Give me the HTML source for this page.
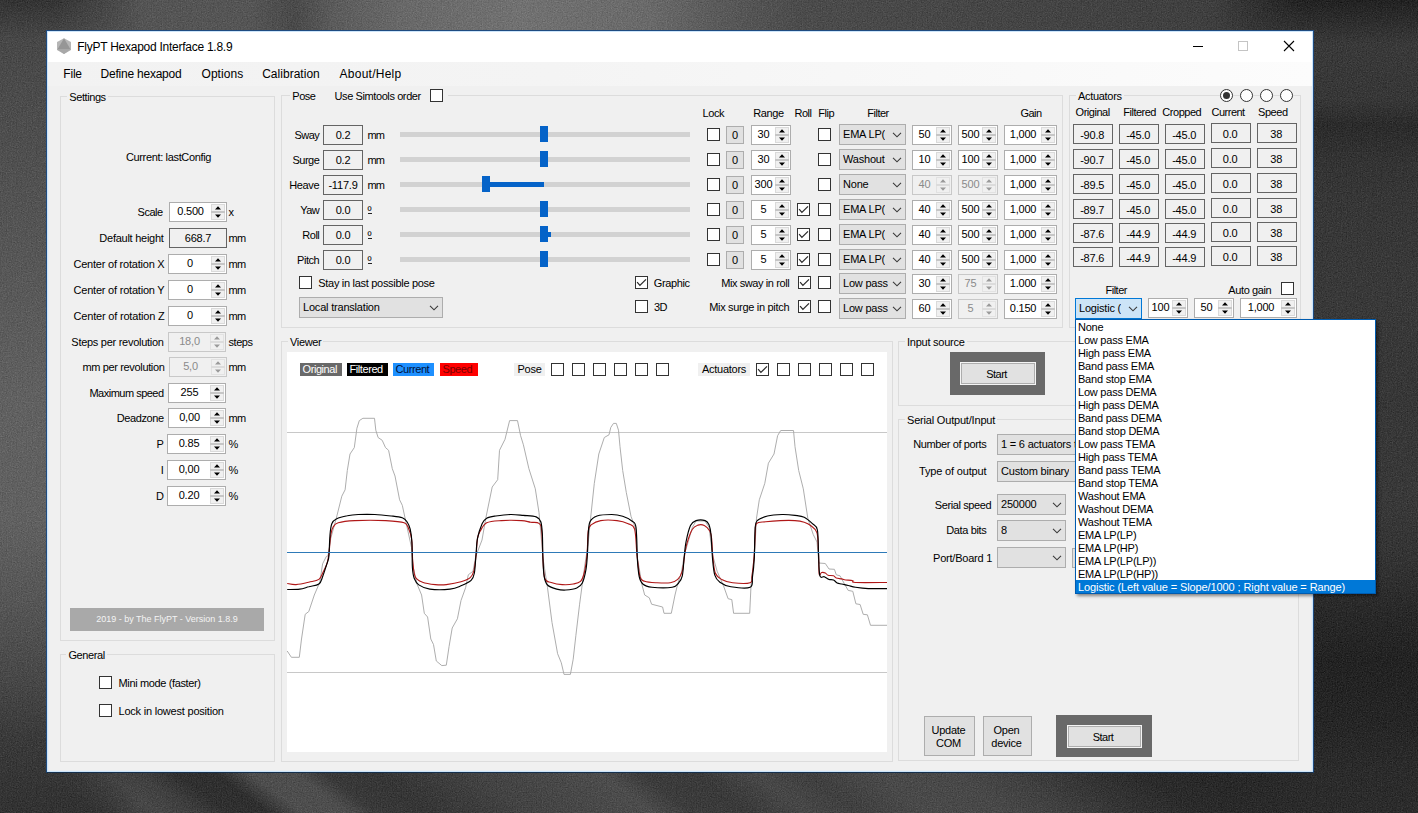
<!DOCTYPE html>
<html><head><meta charset="utf-8"><title>FlyPT Hexapod Interface 1.8.9</title>
<style>
html,body{margin:0;padding:0}
body{width:1418px;height:813px;overflow:hidden;position:relative;background:#444;
 font-family:"Liberation Sans",sans-serif;font-size:11px;color:#000}
#bg,#bg i{position:absolute;left:0;top:0;width:1418px;height:813px;display:block}
#bg{background:linear-gradient(37deg,#232323 1.12%,#343434 2.32%,#292929 3.52%,#404040 5.12%,#4b4b4b 6.32%,#404040 7.72%,#2a2a2a 9.13%,#272727 10.73%,#545454 12.13%,#545454 13.93%,#373737 15.13%,#313131 17.14%,#3a3a3a 19.14%,#454545 21.14%,#4b4b4b 23.54%,#525252 26.15%,#3b3b3b 27.75%,#373737 29.95%,#4b4b4b 32.36%,#404040 34.36%,#4e4e4e 37.16%,#4c4c4c 40.36%,#404040 42.77%,#303030 45.17%,#222222 47.97%,#1c1c1c 52.38%,#262626 54.78%,#242424 57.91%)}
#bg .tp{background:linear-gradient(to right,#2e2e2e 0.0%,#454545 2.1%,#555555 4.9%,#5e5e5e 10.6%,#5f5f5f 17.6%,#4e4e4e 20.8%,#686868 23.6%,#7a7a7a 28.2%,#878787 36.7%,#7c7c7c 45.8%,#656565 50.8%,#515151 56.4%,#484848 70.5%,#404040 84.6%,#303030 91.7%,#151515 100.0%);-webkit-mask-image:linear-gradient(to bottom,#000 0,#000 5%,rgba(0,0,0,.55) 40%,transparent 92%);mask-image:linear-gradient(to bottom,#000 0,#000 5%,rgba(0,0,0,.55) 40%,transparent 92%)}
#bg .lf{width:140px;background:linear-gradient(to bottom,#2e2e2e 0.0%,#4b4b4b 4.9%,#565656 18.5%,#656565 36.9%,#6f6f6f 49.2%,#6f6f6f 64.0%,#606060 73.8%,#4b4b4b 83.6%,#373737 91.0%,#2c2c2c 100.0%);-webkit-mask-image:linear-gradient(to right,#000 0,#000 35%,transparent 100%);mask-image:linear-gradient(to right,#000 0,#000 35%,transparent 100%)}
#bg .rt{left:1218px;width:200px;background:linear-gradient(to bottom,#151515 0.0%,#373737 5.5%,#333333 12.3%,#222222 15.4%,#2e2e2e 19.7%,#333333 24.6%,#363636 36.9%,#333333 49.2%,#363636 61.5%,#2e2e2e 68.9%,#1f1f1f 75.0%,#161616 81.2%,#1a1a1a 88.6%,#222222 94.7%,#232323 100.0%);-webkit-mask-image:linear-gradient(to left,#000 0,#000 55%,transparent 100%);mask-image:linear-gradient(to left,#000 0,#000 55%,transparent 100%)}
div{box-sizing:content-box}
.abs,.t,.grp,.cb,.rb,.sp,.co,.vb,.bt,.pn{position:absolute}
.t{white-space:nowrap;line-height:13px;font-size:11px;letter-spacing:-0.27px}
.gt{background:#f0f0f0;padding:0 2px;margin-left:-2px}
.grp{border:1px solid #dcdcdc}
.cb{border:1px solid #333;background:#fff}
.cb svg{position:absolute;left:0;top:0}
.rb{border:1px solid #333;background:#fff;border-radius:50%}
.rb i{position:absolute;left:2px;top:2px;width:7px;height:7px;border-radius:50%;background:#333}
.sp{border:1px solid #adadad;background:#fff}
.sp .sv{position:absolute;left:0;right:15px;top:0;bottom:0;text-align:center;line-height:17px;letter-spacing:-0.2px;white-space:nowrap}
.sp .sb{position:absolute;right:1px;top:1px;width:14px;height:16px;background:#f0f0f0;box-shadow:inset 0 0 0 1px #dadada}
.sp .sb:after{content:"";position:absolute;left:0;right:0;top:7px;height:2px;background:#c6c6c6}
.sp .sb svg{position:absolute;left:0;top:0;z-index:2}
.ar{fill:#000}
.sp.dis{background:#f0f0f0;border-color:#c8c8c8;color:#8a8a8a}
.sp.dis .ar{fill:#9a9a9a}
.sp.dis .sb{box-shadow:inset 0 0 0 1px #e2e2e2}
.sp.dis .sb:after{background:#dcdcdc}
.co{border:1px solid #adadad;background:#e1e1e1}
.co .cv{position:absolute;left:3px;top:0;bottom:0;line-height:19px;white-space:nowrap;letter-spacing:-0.2px;overflow:hidden}
.co .ch{position:absolute;right:3px;top:7px}
.co.act{border-color:#0078d7;background:#cce4f7}
.vb{border:1px solid #646464;background:#f0f0f0;text-align:center;line-height:19px;letter-spacing:-0.2px}
.bt{border:1px solid #adadad;background:#e1e1e1;text-align:center;letter-spacing:-0.25px}
.bt span{position:absolute;left:0;right:0;top:50%;transform:translateY(-50%);line-height:13px}
.va{line-height:21px;text-indent:-1.6px}
.pn{background:#696969}
.b2 span{margin-left:-2px;margin-top:1px}
.st{border-color:#f4f4f4;box-shadow:inset 0 0 0 1px #adadad;letter-spacing:-0.5px}
.st span{margin-left:-3px}
</style></head><body>
<div id="bg"><i class="tp"></i><i class="lf"></i><i class="rt"></i><svg style="position:absolute;left:0;top:0;opacity:.3" width="1418" height="813"><filter id="nz" color-interpolation-filters="sRGB"><feTurbulence type="fractalNoise" baseFrequency="0.8" numOctaves="2" seed="3"/><feColorMatrix type="matrix" values="0.33 0.33 0.33 0 -0.24 0.33 0.33 0.33 0 -0.24 0.33 0.33 0.33 0 -0.24 0 0 0 0 1"/></filter><rect width="1418" height="813" filter="url(#nz)"/></svg></div>

<div class="abs" style="left:46.2px;top:30.4px;width:1267.7px;height:742.4px;background:#f0f0f0;border:1.2px solid #1f4b80;border-bottom-color:#15304d;box-sizing:border-box;box-shadow:inset 0 0 1.2px 0.8px rgba(185,222,255,.95)"></div>
<div class="abs" style="left:48px;top:32px;width:1264px;height:30px;background:#fff"></div>
<div class="abs" style="left:48px;top:62px;width:1264px;height:24px;background:linear-gradient(to right,#f2f2f2 0,#f4f4f4 40%,#fcfcfc 100%)"></div>
<svg class="abs" style="left:56px;top:37px" width="16" height="18" viewBox="0 0 16 18"><polygon points="8,1.2 15,5 15,13 8,17 1,13 1,5" fill="#b6b6b6"/><polygon points="8,1.2 14.6,12.6 1.4,12.6" fill="#969696"/><polygon points="1.4,12.6 14.6,12.6 8,17" fill="#a8a8a8"/></svg>
<div class="abs" style="left:77.3px;top:39px;font-size:12px;line-height:16px;letter-spacing:-0.26px;white-space:nowrap">FlyPT Hexapod Interface 1.8.9</div>
<svg class="abs" style="left:1180px;top:32px" width="132" height="30" viewBox="0 0 132 30"><path d="M13 14.5 H23" stroke="#000" stroke-width="1"/><rect x="58.5" y="9.5" width="9" height="9" fill="none" stroke="#c4c4c4" stroke-width="1"/><path d="M104 9 L114 19 M114 9 L104 19" stroke="#000" stroke-width="1.1"/></svg>
<div class="abs" style="left:63.3px;top:66px;font-size:12px;line-height:16px;letter-spacing:-0.2px;white-space:nowrap">File</div>
<div class="abs" style="left:100.5px;top:66px;font-size:12px;line-height:16px;letter-spacing:-0.22px;white-space:nowrap">Define hexapod</div>
<div class="abs" style="left:201.5px;top:66px;font-size:12px;line-height:16px;letter-spacing:0.05px;white-space:nowrap">Options</div>
<div class="abs" style="left:262.2px;top:66px;font-size:12px;line-height:16px;letter-spacing:0.02px;white-space:nowrap">Calibration</div>
<div class="abs" style="left:339.5px;top:66px;font-size:12px;line-height:16px;letter-spacing:0.26px;white-space:nowrap">About/Help</div>
<div class="grp" style="left:60px;top:96px;width:213px;height:543px"></div>
<div class="t gt" style="left:69.3px;top:91.0px;letter-spacing:-0.42px;">Settings</div>
<div class="t " style="left:68.5px;width:200px;text-align:center;top:151.0px;letter-spacing:-0.34px;">Current: lastConfig</div>
<div class="t " style="right:1255.4px;top:206.0px;letter-spacing:-0.50px;">Scale</div>
<div class="sp" style="left:169px;top:202px;width:56px;height:18px;"><span class="sv">0.500</span><span class="sb"><svg width="14" height="16" viewBox="0 0 14 16"><path class="ar" d="M4 5.5 L7 2.3 L10 5.5 Z M4 10.5 L7 13.7 L10 10.5 Z"/></svg></span></div>
<div class="t " style="left:228.6px;top:206.0px;letter-spacing:-0.27px;">x</div>
<div class="t " style="right:1254.4px;top:232.0px;letter-spacing:-0.26px;">Default height</div>
<div class="vb" style="left:169px;top:228px;width:56px;height:18px;">668.7</div>
<div class="t " style="left:228.6px;top:232.0px;letter-spacing:-0.80px;">mm</div>
<div class="t " style="right:1253.5px;top:258.0px;letter-spacing:-0.22px;">Center of rotation X</div>
<div class="sp" style="left:168px;top:254px;width:57px;height:18px;"><span class="sv">0</span><span class="sb"><svg width="14" height="16" viewBox="0 0 14 16"><path class="ar" d="M4 5.5 L7 2.3 L10 5.5 Z M4 10.5 L7 13.7 L10 10.5 Z"/></svg></span></div>
<div class="t " style="left:228.6px;top:258.0px;letter-spacing:-0.80px;">mm</div>
<div class="t " style="right:1253.5px;top:284.0px;letter-spacing:-0.21px;">Center of rotation Y</div>
<div class="sp" style="left:168px;top:280px;width:57px;height:18px;"><span class="sv">0</span><span class="sb"><svg width="14" height="16" viewBox="0 0 14 16"><path class="ar" d="M4 5.5 L7 2.3 L10 5.5 Z M4 10.5 L7 13.7 L10 10.5 Z"/></svg></span></div>
<div class="t " style="left:228.6px;top:284.0px;letter-spacing:-0.80px;">mm</div>
<div class="t " style="right:1253.5px;top:310.0px;letter-spacing:-0.19px;">Center of rotation Z</div>
<div class="sp" style="left:168px;top:306px;width:57px;height:18px;"><span class="sv">0</span><span class="sb"><svg width="14" height="16" viewBox="0 0 14 16"><path class="ar" d="M4 5.5 L7 2.3 L10 5.5 Z M4 10.5 L7 13.7 L10 10.5 Z"/></svg></span></div>
<div class="t " style="left:228.6px;top:310.0px;letter-spacing:-0.80px;">mm</div>
<div class="t " style="right:1254.4px;top:336.0px;letter-spacing:-0.28px;">Steps per revolution</div>
<div class="sp dis" style="left:168px;top:332px;width:56px;height:18px;"><span class="sv">18,0</span><span class="sb"><svg width="14" height="16" viewBox="0 0 14 16"><path class="ar" d="M4 5.5 L7 2.3 L10 5.5 Z M4 10.5 L7 13.7 L10 10.5 Z"/></svg></span></div>
<div class="t " style="left:228.6px;top:336.0px;letter-spacing:-0.50px;">steps</div>
<div class="t " style="right:1253.5px;top:361.0px;letter-spacing:-0.35px;">mm per revolution</div>
<div class="sp dis" style="left:169px;top:357px;width:56px;height:18px;"><span class="sv">5,0</span><span class="sb"><svg width="14" height="16" viewBox="0 0 14 16"><path class="ar" d="M4 5.5 L7 2.3 L10 5.5 Z M4 10.5 L7 13.7 L10 10.5 Z"/></svg></span></div>
<div class="t " style="left:228.6px;top:361.0px;letter-spacing:-0.80px;">mm</div>
<div class="t " style="right:1254.4px;top:387.0px;letter-spacing:-0.50px;">Maximum speed</div>
<div class="sp" style="left:168px;top:383px;width:56px;height:18px;"><span class="sv">255</span><span class="sb"><svg width="14" height="16" viewBox="0 0 14 16"><path class="ar" d="M4 5.5 L7 2.3 L10 5.5 Z M4 10.5 L7 13.7 L10 10.5 Z"/></svg></span></div>
<div class="t " style="right:1254.4px;top:412.0px;letter-spacing:-0.41px;">Deadzone</div>
<div class="sp" style="left:168px;top:408px;width:56px;height:18px;"><span class="sv">0,00</span><span class="sb"><svg width="14" height="16" viewBox="0 0 14 16"><path class="ar" d="M4 5.5 L7 2.3 L10 5.5 Z M4 10.5 L7 13.7 L10 10.5 Z"/></svg></span></div>
<div class="t " style="left:228.6px;top:412.0px;letter-spacing:-0.80px;">mm</div>
<div class="t " style="right:1254.4px;top:438.0px;letter-spacing:-0.27px;">P</div>
<div class="sp" style="left:167px;top:434px;width:57px;height:18px;"><span class="sv">0.85</span><span class="sb"><svg width="14" height="16" viewBox="0 0 14 16"><path class="ar" d="M4 5.5 L7 2.3 L10 5.5 Z M4 10.5 L7 13.7 L10 10.5 Z"/></svg></span></div>
<div class="t " style="left:228.6px;top:438.0px;letter-spacing:-0.27px;">%</div>
<div class="t " style="right:1254.4px;top:464.0px;letter-spacing:-0.27px;">I</div>
<div class="sp" style="left:167px;top:460px;width:57px;height:18px;"><span class="sv">0,00</span><span class="sb"><svg width="14" height="16" viewBox="0 0 14 16"><path class="ar" d="M4 5.5 L7 2.3 L10 5.5 Z M4 10.5 L7 13.7 L10 10.5 Z"/></svg></span></div>
<div class="t " style="left:228.6px;top:464.0px;letter-spacing:-0.27px;">%</div>
<div class="t " style="right:1254.4px;top:490.0px;letter-spacing:-0.27px;">D</div>
<div class="sp" style="left:167px;top:486px;width:57px;height:18px;"><span class="sv">0.20</span><span class="sb"><svg width="14" height="16" viewBox="0 0 14 16"><path class="ar" d="M4 5.5 L7 2.3 L10 5.5 Z M4 10.5 L7 13.7 L10 10.5 Z"/></svg></span></div>
<div class="t " style="left:228.6px;top:490.0px;letter-spacing:-0.27px;">%</div>
<div class="abs" style="left:70px;top:608px;width:194px;height:23px;background:#a9a9a9;color:#f4f4f4;font-size:9px;line-height:23px;text-align:center;letter-spacing:0">2019 - by The FlyPT - Version 1.8.9</div>
<div class="grp" style="left:60px;top:654px;width:213px;height:106px"></div>
<div class="t gt" style="left:68.4px;top:649.0px;letter-spacing:-0.39px;">General</div>
<div class="cb" style="left:99px;top:676px;width:11px;height:11px;"></div>
<div class="t " style="left:118.5px;top:677.0px;letter-spacing:-0.36px;">Mini mode (faster)</div>
<div class="cb" style="left:99px;top:704px;width:11px;height:11px;"></div>
<div class="t " style="left:118.5px;top:705.0px;letter-spacing:-0.21px;">Lock in lowest position</div>
<div class="grp" style="left:281px;top:95px;width:780px;height:231px"></div>
<div class="t gt" style="left:292.3px;top:90.0px;letter-spacing:-0.50px;">Pose</div>
<div class="abs" style="left:316px;top:89px;width:132px;height:14px;background:#f0f0f0"></div>
<div class="t " style="left:334.5px;top:90.0px;letter-spacing:-0.40px;">Use Simtools order</div>
<div class="cb" style="left:430px;top:89px;width:11px;height:11px;"></div>
<div class="t " style="left:702.5px;top:107.0px;letter-spacing:-0.41px;">Lock</div>
<div class="t " style="left:753.3px;top:107.0px;letter-spacing:-0.40px;">Range</div>
<div class="t " style="left:794.5px;top:107.0px;letter-spacing:-0.50px;">Roll</div>
<div class="t " style="left:818.3px;top:107.0px;letter-spacing:-0.50px;">Flip</div>
<div class="t " style="left:867.3px;top:107.0px;letter-spacing:-0.50px;">Filter</div>
<div class="t " style="left:1020.4px;top:107.0px;letter-spacing:-0.50px;">Gain</div>
<div class="t " style="right:1098.7px;top:129.0px;letter-spacing:-0.50px;">Sway</div>
<div class="vb" style="left:323px;top:125px;width:38px;height:18px;">0.2</div>
<div class="t " style="left:367.5px;top:129.0px;letter-spacing:-0.80px;">mm</div>
<div class="abs" style="left:400px;top:132px;width:290px;height:5px;background:#d2d2d2"></div>
<div class="abs" style="left:540px;top:126px;width:8px;height:16px;background:#0563c8"></div>
<div class="cb" style="left:707px;top:128px;width:11px;height:11px;"></div>
<div class="bt" style="left:726px;top:126px;width:16px;height:16px;"><span>0</span></div>
<div class="sp" style="left:751px;top:125px;width:38px;height:18px;"><span class="sv">30</span><span class="sb"><svg width="14" height="16" viewBox="0 0 14 16"><path class="ar" d="M4 5.5 L7 2.3 L10 5.5 Z M4 10.5 L7 13.7 L10 10.5 Z"/></svg></span></div>
<div class="cb" style="left:818px;top:128px;width:11px;height:11px;"></div>
<div class="co" style="left:839px;top:124px;width:65px;height:19px;"><span class="cv">EMA LP(</span><svg class="ch" width="10" height="6" viewBox="0 0 10 6"><path d="M1 0.8 L5 4.8 L9 0.8" fill="none" stroke="#3a3a3a" stroke-width="1.1"/></svg></div>
<div class="sp" style="left:912px;top:125px;width:38px;height:18px;"><span class="sv">50</span><span class="sb"><svg width="14" height="16" viewBox="0 0 14 16"><path class="ar" d="M4 5.5 L7 2.3 L10 5.5 Z M4 10.5 L7 13.7 L10 10.5 Z"/></svg></span></div>
<div class="sp" style="left:958px;top:125px;width:38px;height:18px;"><span class="sv">500</span><span class="sb"><svg width="14" height="16" viewBox="0 0 14 16"><path class="ar" d="M4 5.5 L7 2.3 L10 5.5 Z M4 10.5 L7 13.7 L10 10.5 Z"/></svg></span></div>
<div class="sp" style="left:1004px;top:125px;width:51px;height:18px;"><span class="sv">1,000</span><span class="sb"><svg width="14" height="16" viewBox="0 0 14 16"><path class="ar" d="M4 5.5 L7 2.3 L10 5.5 Z M4 10.5 L7 13.7 L10 10.5 Z"/></svg></span></div>
<div class="t " style="right:1098.7px;top:154.0px;letter-spacing:-0.50px;">Surge</div>
<div class="vb" style="left:323px;top:150px;width:38px;height:18px;">0.2</div>
<div class="t " style="left:367.5px;top:154.0px;letter-spacing:-0.80px;">mm</div>
<div class="abs" style="left:400px;top:157px;width:290px;height:5px;background:#d2d2d2"></div>
<div class="abs" style="left:540px;top:151px;width:8px;height:16px;background:#0563c8"></div>
<div class="cb" style="left:707px;top:153px;width:11px;height:11px;"></div>
<div class="bt" style="left:726px;top:151px;width:16px;height:16px;"><span>0</span></div>
<div class="sp" style="left:751px;top:150px;width:38px;height:18px;"><span class="sv">30</span><span class="sb"><svg width="14" height="16" viewBox="0 0 14 16"><path class="ar" d="M4 5.5 L7 2.3 L10 5.5 Z M4 10.5 L7 13.7 L10 10.5 Z"/></svg></span></div>
<div class="cb" style="left:818px;top:153px;width:11px;height:11px;"></div>
<div class="co" style="left:839px;top:149px;width:65px;height:19px;"><span class="cv">Washout</span><svg class="ch" width="10" height="6" viewBox="0 0 10 6"><path d="M1 0.8 L5 4.8 L9 0.8" fill="none" stroke="#3a3a3a" stroke-width="1.1"/></svg></div>
<div class="sp" style="left:912px;top:150px;width:38px;height:18px;"><span class="sv">10</span><span class="sb"><svg width="14" height="16" viewBox="0 0 14 16"><path class="ar" d="M4 5.5 L7 2.3 L10 5.5 Z M4 10.5 L7 13.7 L10 10.5 Z"/></svg></span></div>
<div class="sp" style="left:958px;top:150px;width:38px;height:18px;"><span class="sv">100</span><span class="sb"><svg width="14" height="16" viewBox="0 0 14 16"><path class="ar" d="M4 5.5 L7 2.3 L10 5.5 Z M4 10.5 L7 13.7 L10 10.5 Z"/></svg></span></div>
<div class="sp" style="left:1004px;top:150px;width:51px;height:18px;"><span class="sv">1,000</span><span class="sb"><svg width="14" height="16" viewBox="0 0 14 16"><path class="ar" d="M4 5.5 L7 2.3 L10 5.5 Z M4 10.5 L7 13.7 L10 10.5 Z"/></svg></span></div>
<div class="t " style="right:1098.7px;top:179.0px;letter-spacing:-0.33px;">Heave</div>
<div class="vb" style="left:323px;top:175px;width:38px;height:18px;">-117.9</div>
<div class="t " style="left:367.5px;top:179.0px;letter-spacing:-0.80px;">mm</div>
<div class="abs" style="left:400px;top:182px;width:290px;height:5px;background:#d2d2d2"></div>
<div class="abs" style="left:486px;top:182px;width:58px;height:5px;background:#0563c8"></div>
<div class="abs" style="left:482px;top:176px;width:8px;height:16px;background:#0563c8"></div>
<div class="cb" style="left:707px;top:178px;width:11px;height:11px;"></div>
<div class="bt" style="left:726px;top:176px;width:16px;height:16px;"><span>0</span></div>
<div class="sp" style="left:751px;top:175px;width:38px;height:18px;"><span class="sv">300</span><span class="sb"><svg width="14" height="16" viewBox="0 0 14 16"><path class="ar" d="M4 5.5 L7 2.3 L10 5.5 Z M4 10.5 L7 13.7 L10 10.5 Z"/></svg></span></div>
<div class="cb" style="left:818px;top:178px;width:11px;height:11px;"></div>
<div class="co" style="left:839px;top:174px;width:65px;height:19px;"><span class="cv">None</span><svg class="ch" width="10" height="6" viewBox="0 0 10 6"><path d="M1 0.8 L5 4.8 L9 0.8" fill="none" stroke="#3a3a3a" stroke-width="1.1"/></svg></div>
<div class="sp dis" style="left:912px;top:175px;width:38px;height:18px;"><span class="sv">40</span><span class="sb"><svg width="14" height="16" viewBox="0 0 14 16"><path class="ar" d="M4 5.5 L7 2.3 L10 5.5 Z M4 10.5 L7 13.7 L10 10.5 Z"/></svg></span></div>
<div class="sp dis" style="left:958px;top:175px;width:38px;height:18px;"><span class="sv">500</span><span class="sb"><svg width="14" height="16" viewBox="0 0 14 16"><path class="ar" d="M4 5.5 L7 2.3 L10 5.5 Z M4 10.5 L7 13.7 L10 10.5 Z"/></svg></span></div>
<div class="sp" style="left:1004px;top:175px;width:51px;height:18px;"><span class="sv">1,000</span><span class="sb"><svg width="14" height="16" viewBox="0 0 14 16"><path class="ar" d="M4 5.5 L7 2.3 L10 5.5 Z M4 10.5 L7 13.7 L10 10.5 Z"/></svg></span></div>
<div class="t " style="right:1098.7px;top:204.0px;letter-spacing:-0.50px;">Yaw</div>
<div class="vb" style="left:323px;top:200px;width:38px;height:18px;">0.0</div>
<div class="t " style="left:367.5px;top:204.0px;letter-spacing:-0.27px;">º</div>
<div class="abs" style="left:368px;top:213px;width:4px;height:1px;background:#222"></div>
<div class="abs" style="left:400px;top:207px;width:290px;height:5px;background:#d2d2d2"></div>
<div class="abs" style="left:540px;top:201px;width:8px;height:16px;background:#0563c8"></div>
<div class="cb" style="left:707px;top:203px;width:11px;height:11px;"></div>
<div class="bt" style="left:726px;top:201px;width:16px;height:16px;"><span>0</span></div>
<div class="sp" style="left:751px;top:200px;width:38px;height:18px;"><span class="sv">5</span><span class="sb"><svg width="14" height="16" viewBox="0 0 14 16"><path class="ar" d="M4 5.5 L7 2.3 L10 5.5 Z M4 10.5 L7 13.7 L10 10.5 Z"/></svg></span></div>
<div class="cb" style="left:797px;top:203px;width:11px;height:11px;"><svg width="11" height="11" viewBox="0 0 11 11"><path d="M1.1 5.2 L3.9 8.4 L10 2.4" fill="none" stroke="#2a2a2a" stroke-width="1.25"/></svg></div>
<div class="cb" style="left:818px;top:203px;width:11px;height:11px;"></div>
<div class="co" style="left:839px;top:199px;width:65px;height:19px;"><span class="cv">EMA LP(</span><svg class="ch" width="10" height="6" viewBox="0 0 10 6"><path d="M1 0.8 L5 4.8 L9 0.8" fill="none" stroke="#3a3a3a" stroke-width="1.1"/></svg></div>
<div class="sp" style="left:912px;top:200px;width:38px;height:18px;"><span class="sv">40</span><span class="sb"><svg width="14" height="16" viewBox="0 0 14 16"><path class="ar" d="M4 5.5 L7 2.3 L10 5.5 Z M4 10.5 L7 13.7 L10 10.5 Z"/></svg></span></div>
<div class="sp" style="left:958px;top:200px;width:38px;height:18px;"><span class="sv">500</span><span class="sb"><svg width="14" height="16" viewBox="0 0 14 16"><path class="ar" d="M4 5.5 L7 2.3 L10 5.5 Z M4 10.5 L7 13.7 L10 10.5 Z"/></svg></span></div>
<div class="sp" style="left:1004px;top:200px;width:51px;height:18px;"><span class="sv">1,000</span><span class="sb"><svg width="14" height="16" viewBox="0 0 14 16"><path class="ar" d="M4 5.5 L7 2.3 L10 5.5 Z M4 10.5 L7 13.7 L10 10.5 Z"/></svg></span></div>
<div class="t " style="right:1098.7px;top:229.0px;letter-spacing:-0.50px;">Roll</div>
<div class="vb" style="left:323px;top:225px;width:38px;height:18px;">0.0</div>
<div class="t " style="left:367.5px;top:229.0px;letter-spacing:-0.27px;">º</div>
<div class="abs" style="left:368px;top:238px;width:4px;height:1px;background:#222"></div>
<div class="abs" style="left:400px;top:232px;width:290px;height:5px;background:#d2d2d2"></div>
<div class="abs" style="left:544px;top:232px;width:7px;height:5px;background:#0563c8"></div>
<div class="abs" style="left:540px;top:226px;width:8px;height:16px;background:#0563c8"></div>
<div class="cb" style="left:707px;top:228px;width:11px;height:11px;"></div>
<div class="bt" style="left:726px;top:226px;width:16px;height:16px;"><span>0</span></div>
<div class="sp" style="left:751px;top:225px;width:38px;height:18px;"><span class="sv">5</span><span class="sb"><svg width="14" height="16" viewBox="0 0 14 16"><path class="ar" d="M4 5.5 L7 2.3 L10 5.5 Z M4 10.5 L7 13.7 L10 10.5 Z"/></svg></span></div>
<div class="cb" style="left:797px;top:228px;width:11px;height:11px;"><svg width="11" height="11" viewBox="0 0 11 11"><path d="M1.1 5.2 L3.9 8.4 L10 2.4" fill="none" stroke="#2a2a2a" stroke-width="1.25"/></svg></div>
<div class="cb" style="left:818px;top:228px;width:11px;height:11px;"></div>
<div class="co" style="left:839px;top:224px;width:65px;height:19px;"><span class="cv">EMA LP(</span><svg class="ch" width="10" height="6" viewBox="0 0 10 6"><path d="M1 0.8 L5 4.8 L9 0.8" fill="none" stroke="#3a3a3a" stroke-width="1.1"/></svg></div>
<div class="sp" style="left:912px;top:225px;width:38px;height:18px;"><span class="sv">40</span><span class="sb"><svg width="14" height="16" viewBox="0 0 14 16"><path class="ar" d="M4 5.5 L7 2.3 L10 5.5 Z M4 10.5 L7 13.7 L10 10.5 Z"/></svg></span></div>
<div class="sp" style="left:958px;top:225px;width:38px;height:18px;"><span class="sv">500</span><span class="sb"><svg width="14" height="16" viewBox="0 0 14 16"><path class="ar" d="M4 5.5 L7 2.3 L10 5.5 Z M4 10.5 L7 13.7 L10 10.5 Z"/></svg></span></div>
<div class="sp" style="left:1004px;top:225px;width:51px;height:18px;"><span class="sv">1,000</span><span class="sb"><svg width="14" height="16" viewBox="0 0 14 16"><path class="ar" d="M4 5.5 L7 2.3 L10 5.5 Z M4 10.5 L7 13.7 L10 10.5 Z"/></svg></span></div>
<div class="t " style="right:1098.7px;top:254.0px;letter-spacing:-0.44px;">Pitch</div>
<div class="vb" style="left:323px;top:250px;width:38px;height:18px;">0.0</div>
<div class="t " style="left:367.5px;top:254.0px;letter-spacing:-0.27px;">º</div>
<div class="abs" style="left:368px;top:263px;width:4px;height:1px;background:#222"></div>
<div class="abs" style="left:400px;top:257px;width:290px;height:5px;background:#d2d2d2"></div>
<div class="abs" style="left:540px;top:251px;width:8px;height:16px;background:#0563c8"></div>
<div class="cb" style="left:707px;top:253px;width:11px;height:11px;"></div>
<div class="bt" style="left:726px;top:251px;width:16px;height:16px;"><span>0</span></div>
<div class="sp" style="left:751px;top:250px;width:38px;height:18px;"><span class="sv">5</span><span class="sb"><svg width="14" height="16" viewBox="0 0 14 16"><path class="ar" d="M4 5.5 L7 2.3 L10 5.5 Z M4 10.5 L7 13.7 L10 10.5 Z"/></svg></span></div>
<div class="cb" style="left:797px;top:253px;width:11px;height:11px;"><svg width="11" height="11" viewBox="0 0 11 11"><path d="M1.1 5.2 L3.9 8.4 L10 2.4" fill="none" stroke="#2a2a2a" stroke-width="1.25"/></svg></div>
<div class="cb" style="left:818px;top:253px;width:11px;height:11px;"></div>
<div class="co" style="left:839px;top:249px;width:65px;height:19px;"><span class="cv">EMA LP(</span><svg class="ch" width="10" height="6" viewBox="0 0 10 6"><path d="M1 0.8 L5 4.8 L9 0.8" fill="none" stroke="#3a3a3a" stroke-width="1.1"/></svg></div>
<div class="sp" style="left:912px;top:250px;width:38px;height:18px;"><span class="sv">40</span><span class="sb"><svg width="14" height="16" viewBox="0 0 14 16"><path class="ar" d="M4 5.5 L7 2.3 L10 5.5 Z M4 10.5 L7 13.7 L10 10.5 Z"/></svg></span></div>
<div class="sp" style="left:958px;top:250px;width:38px;height:18px;"><span class="sv">500</span><span class="sb"><svg width="14" height="16" viewBox="0 0 14 16"><path class="ar" d="M4 5.5 L7 2.3 L10 5.5 Z M4 10.5 L7 13.7 L10 10.5 Z"/></svg></span></div>
<div class="sp" style="left:1004px;top:250px;width:51px;height:18px;"><span class="sv">1,000</span><span class="sb"><svg width="14" height="16" viewBox="0 0 14 16"><path class="ar" d="M4 5.5 L7 2.3 L10 5.5 Z M4 10.5 L7 13.7 L10 10.5 Z"/></svg></span></div>
<div class="t " style="right:628.8px;top:277.0px;letter-spacing:-0.41px;">Mix sway in roll</div>
<div class="cb" style="left:798px;top:276px;width:11px;height:11px;"><svg width="11" height="11" viewBox="0 0 11 11"><path d="M1.1 5.2 L3.9 8.4 L10 2.4" fill="none" stroke="#2a2a2a" stroke-width="1.25"/></svg></div>
<div class="cb" style="left:818px;top:276px;width:11px;height:11px;"></div>
<div class="co" style="left:839px;top:273px;width:65px;height:19px;"><span class="cv">Low pass</span><svg class="ch" width="10" height="6" viewBox="0 0 10 6"><path d="M1 0.8 L5 4.8 L9 0.8" fill="none" stroke="#3a3a3a" stroke-width="1.1"/></svg></div>
<div class="sp" style="left:912px;top:274px;width:38px;height:18px;"><span class="sv">30</span><span class="sb"><svg width="14" height="16" viewBox="0 0 14 16"><path class="ar" d="M4 5.5 L7 2.3 L10 5.5 Z M4 10.5 L7 13.7 L10 10.5 Z"/></svg></span></div>
<div class="sp dis" style="left:958px;top:274px;width:38px;height:18px;"><span class="sv">75</span><span class="sb"><svg width="14" height="16" viewBox="0 0 14 16"><path class="ar" d="M4 5.5 L7 2.3 L10 5.5 Z M4 10.5 L7 13.7 L10 10.5 Z"/></svg></span></div>
<div class="sp" style="left:1004px;top:274px;width:51px;height:18px;"><span class="sv">1.000</span><span class="sb"><svg width="14" height="16" viewBox="0 0 14 16"><path class="ar" d="M4 5.5 L7 2.3 L10 5.5 Z M4 10.5 L7 13.7 L10 10.5 Z"/></svg></span></div>
<div class="t " style="right:628.8px;top:301.0px;letter-spacing:-0.31px;">Mix surge in pitch</div>
<div class="cb" style="left:798px;top:300px;width:11px;height:11px;"><svg width="11" height="11" viewBox="0 0 11 11"><path d="M1.1 5.2 L3.9 8.4 L10 2.4" fill="none" stroke="#2a2a2a" stroke-width="1.25"/></svg></div>
<div class="cb" style="left:818px;top:300px;width:11px;height:11px;"></div>
<div class="co" style="left:839px;top:298px;width:65px;height:19px;"><span class="cv">Low pass</span><svg class="ch" width="10" height="6" viewBox="0 0 10 6"><path d="M1 0.8 L5 4.8 L9 0.8" fill="none" stroke="#3a3a3a" stroke-width="1.1"/></svg></div>
<div class="sp" style="left:912px;top:299px;width:38px;height:18px;"><span class="sv">60</span><span class="sb"><svg width="14" height="16" viewBox="0 0 14 16"><path class="ar" d="M4 5.5 L7 2.3 L10 5.5 Z M4 10.5 L7 13.7 L10 10.5 Z"/></svg></span></div>
<div class="sp dis" style="left:958px;top:299px;width:38px;height:18px;"><span class="sv">5</span><span class="sb"><svg width="14" height="16" viewBox="0 0 14 16"><path class="ar" d="M4 5.5 L7 2.3 L10 5.5 Z M4 10.5 L7 13.7 L10 10.5 Z"/></svg></span></div>
<div class="sp" style="left:1004px;top:299px;width:51px;height:18px;"><span class="sv">0.150</span><span class="sb"><svg width="14" height="16" viewBox="0 0 14 16"><path class="ar" d="M4 5.5 L7 2.3 L10 5.5 Z M4 10.5 L7 13.7 L10 10.5 Z"/></svg></span></div>
<div class="cb" style="left:299px;top:276px;width:11px;height:11px;"></div>
<div class="t " style="left:318.3px;top:277.0px;letter-spacing:-0.30px;">Stay in last possible pose</div>
<div class="co" style="left:299px;top:297px;width:142px;height:19px;"><span class="cv">Local translation</span><svg class="ch" width="10" height="6" viewBox="0 0 10 6"><path d="M1 0.8 L5 4.8 L9 0.8" fill="none" stroke="#3a3a3a" stroke-width="1.1"/></svg></div>
<div class="cb" style="left:635px;top:276px;width:11px;height:11px;"><svg width="11" height="11" viewBox="0 0 11 11"><path d="M1.1 5.2 L3.9 8.4 L10 2.4" fill="none" stroke="#2a2a2a" stroke-width="1.25"/></svg></div>
<div class="t " style="left:653.7px;top:277.0px;letter-spacing:-0.36px;">Graphic</div>
<div class="cb" style="left:635px;top:300px;width:11px;height:11px;"></div>
<div class="t " style="left:654.0px;top:301.0px;letter-spacing:-0.50px;">3D</div>
<div class="grp" style="left:1069px;top:95px;width:230px;height:231px"></div>
<div class="t gt" style="left:1078px;top:90.0px;letter-spacing:-0.31px;">Actuators</div>
<div class="rb" style="left:1220.0px;top:89.0px;width:11px;height:11px;"><i></i></div>
<div class="rb" style="left:1240.0px;top:89.0px;width:11px;height:11px;"></div>
<div class="rb" style="left:1260.0px;top:89.0px;width:11px;height:11px;"></div>
<div class="rb" style="left:1280.0px;top:89.0px;width:11px;height:11px;"></div>
<div class="t " style="left:1075.6px;top:106.0px;letter-spacing:-0.48px;">Original</div>
<div class="t " style="left:1123.3px;top:106.0px;letter-spacing:-0.50px;">Filtered</div>
<div class="t " style="left:1162.3px;top:106.0px;letter-spacing:-0.46px;">Cropped</div>
<div class="t " style="left:1211.5px;top:106.0px;letter-spacing:-0.50px;">Current</div>
<div class="t " style="left:1258.0px;top:106.0px;letter-spacing:-0.45px;">Speed</div>
<div class="vb va" style="left:1073px;top:124px;width:38px;height:18px;">-90.8</div>
<div class="vb va" style="left:1119px;top:124px;width:38px;height:18px;">-45.0</div>
<div class="vb va" style="left:1165px;top:124px;width:38px;height:18px;">-45.0</div>
<div class="vb va" style="left:1211px;top:123px;width:38px;height:18px;">0.0</div>
<div class="vb va" style="left:1257px;top:123px;width:38px;height:18px;">38</div>
<div class="vb va" style="left:1073px;top:149px;width:38px;height:18px;">-90.7</div>
<div class="vb va" style="left:1119px;top:149px;width:38px;height:18px;">-45.0</div>
<div class="vb va" style="left:1165px;top:149px;width:38px;height:18px;">-45.0</div>
<div class="vb va" style="left:1211px;top:148px;width:38px;height:18px;">0.0</div>
<div class="vb va" style="left:1257px;top:148px;width:38px;height:18px;">38</div>
<div class="vb va" style="left:1073px;top:174px;width:38px;height:18px;">-89.5</div>
<div class="vb va" style="left:1119px;top:174px;width:38px;height:18px;">-45.0</div>
<div class="vb va" style="left:1165px;top:174px;width:38px;height:18px;">-45.0</div>
<div class="vb va" style="left:1211px;top:173px;width:38px;height:18px;">0.0</div>
<div class="vb va" style="left:1257px;top:173px;width:38px;height:18px;">38</div>
<div class="vb va" style="left:1073px;top:199px;width:38px;height:18px;">-89.7</div>
<div class="vb va" style="left:1119px;top:199px;width:38px;height:18px;">-45.0</div>
<div class="vb va" style="left:1165px;top:199px;width:38px;height:18px;">-45.0</div>
<div class="vb va" style="left:1211px;top:198px;width:38px;height:18px;">0.0</div>
<div class="vb va" style="left:1257px;top:198px;width:38px;height:18px;">38</div>
<div class="vb va" style="left:1073px;top:223px;width:38px;height:18px;">-87.6</div>
<div class="vb va" style="left:1119px;top:223px;width:38px;height:18px;">-44.9</div>
<div class="vb va" style="left:1165px;top:223px;width:38px;height:18px;">-44.9</div>
<div class="vb va" style="left:1211px;top:222px;width:38px;height:18px;">0.0</div>
<div class="vb va" style="left:1257px;top:222px;width:38px;height:18px;">38</div>
<div class="vb va" style="left:1073px;top:247px;width:38px;height:18px;">-87.6</div>
<div class="vb va" style="left:1119px;top:247px;width:38px;height:18px;">-44.9</div>
<div class="vb va" style="left:1165px;top:247px;width:38px;height:18px;">-44.9</div>
<div class="vb va" style="left:1211px;top:246px;width:38px;height:18px;">0.0</div>
<div class="vb va" style="left:1257px;top:246px;width:38px;height:18px;">38</div>
<div class="t " style="left:1105.5px;top:284.0px;letter-spacing:-0.50px;">Filter</div>
<div class="t " style="left:1228.3px;top:284.0px;letter-spacing:-0.39px;">Auto gain</div>
<div class="cb" style="left:1281px;top:282px;width:11px;height:11px;"></div>
<div class="co act" style="left:1075px;top:298px;width:65px;height:19px;"><span class="cv">Logistic (</span><svg class="ch" width="10" height="6" viewBox="0 0 10 6"><path d="M1 0.8 L5 4.8 L9 0.8" fill="none" stroke="#3a3a3a" stroke-width="1.1"/></svg></div>
<div class="sp" style="left:1148px;top:298px;width:38px;height:18px;"><span class="sv">100</span><span class="sb"><svg width="14" height="16" viewBox="0 0 14 16"><path class="ar" d="M4 5.5 L7 2.3 L10 5.5 Z M4 10.5 L7 13.7 L10 10.5 Z"/></svg></span></div>
<div class="sp" style="left:1194px;top:298px;width:38px;height:18px;"><span class="sv">50</span><span class="sb"><svg width="14" height="16" viewBox="0 0 14 16"><path class="ar" d="M4 5.5 L7 2.3 L10 5.5 Z M4 10.5 L7 13.7 L10 10.5 Z"/></svg></span></div>
<div class="sp" style="left:1240px;top:298px;width:55px;height:18px;"><span class="sv">1,000</span><span class="sb"><svg width="14" height="16" viewBox="0 0 14 16"><path class="ar" d="M4 5.5 L7 2.3 L10 5.5 Z M4 10.5 L7 13.7 L10 10.5 Z"/></svg></span></div>
<div class="grp" style="left:281px;top:341px;width:610px;height:419px"></div>
<div class="t gt" style="left:290px;top:336.0px;letter-spacing:-0.35px;">Viewer</div>
<div class="abs" style="left:287px;top:352px;width:600px;height:399.5px;background:#fff"></div>
<svg class="abs" style="left:287px;top:352px" width="600" height="400" viewBox="0 0 600 400"><path d="M0 80.5 H600 M0 320.5 H600" stroke="#c8c8c8" stroke-width="1" fill="none"/><polyline points="0.2,299.0 4.4,305.3 12.3,305.3 14.5,287.0 18.2,262.3 21.8,259.5 27.3,243.0 32.8,230.2 35.6,211.8 39.3,204.5 41.0,203.8 43.8,186.3 49.3,166.2 54.8,144.2 58.1,137.8 60.3,118.5 63.0,102.0 67.3,95.6 69.9,76.3 72.3,68.6 75.9,66.3 87.5,66.3 88.8,78.2 91.1,85.5 95.2,88.3 98.5,95.6 101.6,98.3 105.3,116.7 108.0,124.0 112.6,147.8 115.3,153.3 118.1,166.2 124.5,195.5 126.3,215.5 130.0,232.0 134.6,243.0 137.3,261.3 140.6,265.0 143.8,287.0 146.5,292.5 149.3,309.0 154.8,313.6 159.3,313.2 162.1,294.3 165.2,276.0 170.4,266.8 174.0,248.5 178.6,235.7 181.3,222.8 186.0,219.2 188.7,204.5 195.0,188.0 198.8,166.2 205.2,135.0 210.7,127.7 212.5,98.3 218.0,87.3 222.6,68.6 230.5,68.6 233.6,83.7 236.4,92.8 241.9,116.7 248.3,136.8 252.0,160.7 254.0,183.0 256.0,206.3 260.5,235.7 265.0,270.5 270.6,301.7 274.3,310.8 277.0,322.4 283.4,322.4 286.2,307.2 288.9,283.3 292.6,252.2 295.3,232.0 298.0,211.8 301.0,193.0 303.6,166.2 307.3,131.3 311.8,102.0 317.3,85.5 322.0,82.8 323.8,75.4 326.5,71.4 329.3,71.4 331.5,78.2 333.0,94.7 335.7,118.5 339.3,140.5 344.0,164.3 349.4,179.0 350.5,206.3 355.0,233.0 357.7,243.0 362.3,245.8 364.6,252.2 375.6,255.0 377.0,261.3 384.3,261.3 388.0,243.0 390.7,232.0 394.3,221.0 398.0,199.0 399.0,197.3 405.4,175.3 409.0,169.0 418.0,169.0 422.0,175.3 425.5,202.7 430.1,219.2 436.5,233.8 441.1,246.7 444.8,247.6 446.6,261.3 462.7,261.3 464.0,233.8 467.7,199.0 469.5,166.2 472.3,147.8 477.8,131.3 481.4,111.2 487.0,102.0 490.6,83.7 493.7,78.5 506.5,78.5 508.0,94.7 511.7,118.5 516.3,136.8 520.8,166.2 526.3,182.7 530.0,190.0 531.8,211.0 538.3,211.5 542.0,217.0 547.4,217.3 549.3,222.8 553.0,223.8 557.5,232.0 561.2,238.4 565.8,239.3 568.9,251.8 573.1,252.5 576.2,262.3 580.4,262.8 583.5,273.3 600.0,273.3" fill="none" stroke="#a9a9a9" stroke-width="0.95"/><path d="M0.2 231.5 C1.7 231.7 5.4 232.8 9.0 232.6 C12.6 232.4 18.0 231.1 21.8 230.2 C25.6 229.3 29.4 229.2 31.9 227.4 C34.3 225.6 35.1 222.0 36.5 219.2 C37.9 216.5 39.3 213.9 40.2 210.9 C41.1 207.9 41.4 205.7 42.0 201.0 C42.6 196.3 43.1 187.0 43.8 182.7 C44.5 178.4 44.8 177.3 46.0 175.3 C47.2 173.3 47.6 171.9 51.2 170.8 C54.8 169.7 59.8 169.0 67.7 168.6 C75.6 168.2 90.6 168.2 98.8 168.6 C107.1 169.0 113.4 169.4 117.2 170.8 C121.0 172.2 120.6 174.6 121.8 177.2 C123.0 179.8 123.9 182.3 124.5 186.3 C125.1 190.3 125.2 197.0 125.4 201.0 C125.6 205.0 125.3 206.0 125.8 210.0 C126.3 214.0 126.6 221.3 128.2 224.7 C129.8 228.1 132.2 228.9 135.5 230.2 C138.8 231.5 144.3 232.2 148.3 232.6 C152.3 233.0 155.0 233.1 159.3 232.6 C163.6 232.1 170.0 231.0 174.0 229.8 C178.0 228.6 181.1 227.4 183.2 225.6 C185.3 223.8 185.8 222.8 186.8 219.2 C187.8 215.6 188.4 209.5 189.0 204.0 C189.6 198.5 189.8 190.5 190.5 186.3 C191.2 182.1 191.8 181.6 193.3 179.0 C194.8 176.4 196.2 172.5 199.7 170.8 C203.2 169.1 208.6 169.0 214.4 168.6 C220.2 168.2 229.6 168.3 234.5 168.6 C239.4 168.9 240.8 169.8 243.7 170.2 C246.6 170.7 250.2 169.8 252.0 171.3 C253.8 172.8 254.1 173.2 254.7 179.0 C255.4 184.8 255.4 198.1 255.9 206.0 C256.4 213.9 256.4 222.4 257.8 226.5 C259.2 230.6 261.3 229.5 264.2 230.5 C267.1 231.5 271.5 232.4 275.2 232.6 C278.9 232.9 283.2 232.6 286.2 232.0 C289.3 231.4 291.7 231.1 293.5 229.3 C295.3 227.5 296.1 225.4 297.2 221.0 C298.3 216.6 299.3 210.0 300.0 203.0 C300.7 196.0 300.5 184.1 301.2 179.0 C302.0 173.9 302.4 174.3 304.5 172.6 C306.6 170.9 309.5 169.3 313.7 168.6 C318.0 167.9 325.4 168.1 330.0 168.6 C334.6 169.1 338.3 170.3 341.2 171.7 C344.1 173.1 346.1 172.0 347.6 177.2 C349.1 182.4 349.1 195.1 350.0 203.0 C350.9 210.9 351.7 220.3 353.0 224.7 C354.3 229.1 355.1 228.3 357.7 229.3 C360.3 230.3 364.4 230.5 368.7 230.7 C373.0 230.9 379.6 231.3 383.3 230.7 C387.0 230.2 388.7 229.3 390.7 227.4 C392.7 225.5 394.2 223.1 395.3 219.2 C396.4 215.3 396.8 208.6 397.5 204.0 C398.2 199.4 398.5 196.3 399.8 191.8 C401.1 187.3 403.5 180.3 405.4 177.2 C407.2 174.1 408.9 173.7 410.9 173.1 C412.9 172.5 415.3 172.5 417.3 173.5 C419.3 174.5 421.6 176.9 422.8 179.0 C424.0 181.1 424.1 182.1 424.6 186.3 C425.1 190.5 425.2 198.2 425.8 204.0 C426.4 209.8 426.8 217.1 428.3 221.0 C429.8 224.9 431.8 225.8 434.7 227.4 C437.6 229.0 441.0 230.2 445.7 230.7 C450.4 231.3 459.9 231.8 463.1 230.7 C466.3 229.6 464.4 228.1 465.0 224.0 C465.6 219.9 466.5 212.8 467.0 206.0 C467.5 199.2 467.8 188.7 468.2 183.0 C468.6 177.3 467.8 173.9 469.5 171.7 C471.2 169.5 474.7 170.3 478.7 169.8 C482.7 169.3 488.4 168.8 493.3 168.6 C498.2 168.4 504.0 168.3 508.0 168.6 C512.0 168.9 514.6 169.4 517.2 170.2 C519.8 171.0 521.5 171.7 523.6 173.5 C525.7 175.3 528.7 176.2 530.0 180.8 C531.3 185.4 531.1 194.1 531.5 201.0 C531.9 207.9 531.7 218.8 532.2 222.0 C532.7 225.2 533.6 220.7 534.6 220.5 C535.6 220.3 537.2 220.5 538.3 221.0 C539.4 221.5 539.6 222.7 541.0 223.2 C542.4 223.7 545.1 223.3 546.5 223.8 C547.9 224.3 547.9 225.6 549.3 226.1 C550.7 226.6 553.4 226.6 554.8 226.9 C556.2 227.2 555.7 227.5 557.5 227.8 C559.3 228.1 564.0 228.3 565.8 228.7 C567.6 229.2 562.8 230.2 568.5 230.5 C574.2 230.8 594.8 230.5 600.0 230.5" fill="none" stroke="#b01818" stroke-width="1.1"/><path d="M0.2 237.5 C2.3 237.4 9.1 237.6 12.7 237.1 C16.3 236.7 18.6 235.6 21.8 234.8 C25.0 233.9 29.6 233.7 31.9 232.0 C34.2 230.3 34.4 227.8 35.6 224.7 C36.8 221.7 38.3 216.8 39.3 213.7 C40.3 210.6 41.1 208.7 41.6 206.3 C42.1 203.8 42.0 202.9 42.2 199.0 C42.4 195.1 42.6 187.3 43.0 182.7 C43.4 178.2 43.8 174.3 44.8 171.7 C45.9 169.1 46.7 168.3 49.3 167.0 C51.9 165.7 56.6 164.5 60.3 163.8 C64.0 163.0 66.7 162.7 71.3 162.5 C75.9 162.3 82.3 162.2 87.8 162.5 C93.3 162.8 99.7 163.5 104.3 164.0 C108.9 164.5 112.7 164.8 115.3 165.8 C117.9 166.8 118.7 167.9 120.0 169.8 C121.3 171.7 122.4 173.8 123.2 177.2 C124.0 180.6 124.5 183.6 124.9 190.0 C125.3 196.4 125.0 209.4 125.4 215.5 C125.8 221.6 126.2 223.6 127.3 226.5 C128.4 229.4 129.2 231.1 131.8 232.9 C134.4 234.7 137.6 236.4 142.8 237.1 C148.0 237.8 157.8 237.7 163.0 237.1 C168.2 236.6 170.5 235.3 174.0 233.8 C177.5 232.3 181.9 230.4 184.1 228.3 C186.3 226.2 186.6 225.3 187.4 221.0 C188.2 216.7 188.5 208.5 189.0 202.7 C189.5 196.9 189.5 191.5 190.5 186.3 C191.5 181.1 193.6 175.1 195.1 171.7 C196.6 168.4 197.4 167.5 199.7 166.2 C202.0 164.9 204.8 164.6 208.8 164.0 C212.8 163.4 218.9 162.6 223.5 162.5 C228.1 162.4 232.1 163.0 236.4 163.4 C240.7 163.8 246.3 163.8 249.2 164.9 C252.1 166.0 252.8 166.8 253.8 169.8 C254.8 172.8 255.0 176.6 255.4 182.7 C255.7 188.8 255.6 199.3 255.9 206.3 C256.2 213.3 256.4 220.3 257.2 224.7 C258.0 229.2 258.4 230.9 260.5 233.0 C262.6 235.1 266.7 236.3 269.7 237.1 C272.8 237.9 275.4 238.2 278.8 238.0 C282.1 237.8 287.0 237.2 289.8 236.0 C292.5 234.8 293.8 234.1 295.3 231.0 C296.8 227.9 298.1 222.3 299.0 217.3 C299.9 212.3 300.1 206.6 300.5 200.8 C300.9 195.0 300.8 187.9 301.2 182.7 C301.6 177.5 301.5 172.9 303.0 169.8 C304.5 166.7 306.4 165.2 310.0 164.0 C313.6 162.8 320.4 162.5 324.7 162.5 C329.0 162.5 332.4 163.2 335.7 164.3 C339.1 165.4 342.6 167.2 344.8 169.0 C347.0 170.8 348.1 169.1 349.0 175.3 C349.9 181.5 349.8 198.1 350.3 206.3 C350.8 214.5 351.3 220.4 352.2 224.7 C353.1 229.0 353.7 230.2 355.8 232.0 C357.9 233.8 360.1 234.7 365.0 235.3 C369.9 235.8 380.8 236.0 385.2 235.3 C389.6 234.6 389.9 232.9 391.6 231.0 C393.3 229.1 394.4 227.9 395.3 223.8 C396.2 219.7 396.5 211.9 397.1 206.3 C397.7 200.7 397.9 195.5 399.0 190.0 C400.1 184.5 401.8 177.1 403.5 173.5 C405.2 169.9 406.6 169.4 409.0 168.6 C411.4 167.8 416.1 167.9 418.2 168.6 C420.4 169.3 420.9 170.3 421.9 172.6 C422.9 175.0 423.4 177.1 424.0 182.7 C424.6 188.3 424.9 199.6 425.5 206.3 C426.1 213.0 426.5 218.8 427.7 222.8 C428.9 226.8 430.2 228.2 432.9 230.2 C435.6 232.2 438.9 233.9 443.9 234.8 C448.9 235.6 459.5 237.0 463.1 235.3 C466.7 233.6 464.8 229.5 465.5 224.7 C466.2 219.9 466.9 213.9 467.3 206.3 C467.7 198.7 467.6 185.2 468.0 179.0 C468.4 172.8 467.8 171.5 469.9 169.0 C472.0 166.5 476.3 165.1 480.5 164.0 C484.7 162.9 490.6 162.6 495.2 162.5 C499.8 162.4 504.3 162.9 508.0 163.4 C511.7 163.9 514.3 163.9 517.2 165.3 C520.1 166.7 523.2 169.6 525.4 171.7 C527.6 173.8 529.4 173.1 530.4 178.0 C531.4 182.9 531.1 193.4 531.5 201.0 C531.9 208.6 531.8 219.4 532.8 223.4 C533.8 227.3 535.8 224.0 537.3 224.7 C538.8 225.4 540.5 226.8 542.0 227.4 C543.5 227.9 545.1 227.4 546.5 228.0 C547.9 228.6 548.8 230.3 550.2 231.0 C551.6 231.7 553.0 231.6 554.8 232.0 C556.6 232.4 558.9 233.0 561.2 233.5 C563.5 234.0 565.1 234.8 568.5 235.3 C571.9 235.8 576.0 236.4 581.3 236.6 C586.5 236.8 596.9 236.6 600.0 236.6" fill="none" stroke="#000" stroke-width="1.15" stroke-linejoin="round"/><path d="M0 200.5 H600" stroke="#2e7ab8" stroke-width="1" fill="none"/></svg>
<div class="abs t" style="left:300px;top:363px;width:39.5px;height:13px;padding-left:2.5px;background:#696969;color:#fff;letter-spacing:-0.42px">Original</div>
<div class="abs t" style="left:347px;top:363px;width:38.5px;height:13px;padding-left:2.5px;background:#000;color:#fff;letter-spacing:-0.42px">Filtered</div>
<div class="abs t" style="left:393px;top:363px;width:38.5px;height:13px;padding-left:2.5px;background:#1e90ff;color:#00103a;letter-spacing:-0.42px">Current</div>
<div class="abs t" style="left:440px;top:363px;width:35.5px;height:13px;padding-left:2.5px;background:#ff0000;color:#7a0000;letter-spacing:-0.42px">Speed</div>
<div class="abs t" style="left:514px;top:363px;width:31px;height:13px;background:#f0f0f0;text-align:center">Pose</div>
<div class="cb" style="left:551px;top:363px;width:11px;height:11px;"></div>
<div class="cb" style="left:572px;top:363px;width:11px;height:11px;"></div>
<div class="cb" style="left:593px;top:363px;width:11px;height:11px;"></div>
<div class="cb" style="left:614px;top:363px;width:11px;height:11px;"></div>
<div class="cb" style="left:635px;top:363px;width:11px;height:11px;"></div>
<div class="cb" style="left:656px;top:363px;width:11px;height:11px;"></div>
<div class="abs t" style="left:698px;top:363px;width:52px;height:13px;background:#f0f0f0;text-align:center">Actuators</div>
<div class="cb" style="left:756px;top:363px;width:11px;height:11px;"><svg width="11" height="11" viewBox="0 0 11 11"><path d="M1.1 5.2 L3.9 8.4 L10 2.4" fill="none" stroke="#2a2a2a" stroke-width="1.25"/></svg></div>
<div class="cb" style="left:777px;top:363px;width:11px;height:11px;"></div>
<div class="cb" style="left:798px;top:363px;width:11px;height:11px;"></div>
<div class="cb" style="left:819px;top:363px;width:11px;height:11px;"></div>
<div class="cb" style="left:840px;top:363px;width:11px;height:11px;"></div>
<div class="cb" style="left:861px;top:363px;width:11px;height:11px;"></div>
<div class="grp" style="left:898px;top:341px;width:399px;height:63px"></div>
<div class="t gt" style="left:907px;top:336.0px;letter-spacing:-0.25px;">Input source</div>
<div class="pn" style="left:950px;top:352px;width:95px;height:43px;"></div>
<div class="bt st" style="left:960px;top:362px;width:74px;height:21px;"><span>Start</span></div>
<div class="grp" style="left:898px;top:419px;width:399px;height:340px"></div>
<div class="t gt" style="left:907px;top:414.0px;letter-spacing:-0.19px;">Serial Output/Input</div>
<div class="t " style="right:431.7px;top:438.0px;letter-spacing:-0.38px;">Number of ports</div>
<div class="co" style="left:997px;top:434px;width:118px;height:19px;"><span class="cv">1 = 6 actuators to one port</span><svg class="ch" width="10" height="6" viewBox="0 0 10 6"><path d="M1 0.8 L5 4.8 L9 0.8" fill="none" stroke="#3a3a3a" stroke-width="1.1"/></svg></div>
<div class="t " style="right:431.7px;top:465.0px;letter-spacing:-0.17px;">Type of output</div>
<div class="co" style="left:997px;top:461px;width:118px;height:19px;"><span class="cv">Custom binary</span><svg class="ch" width="10" height="6" viewBox="0 0 10 6"><path d="M1 0.8 L5 4.8 L9 0.8" fill="none" stroke="#3a3a3a" stroke-width="1.1"/></svg></div>
<div class="t " style="right:426.8px;top:499.0px;letter-spacing:-0.39px;">Serial speed</div>
<div class="co" style="left:997px;top:494px;width:67px;height:19px;"><span class="cv">250000</span><svg class="ch" width="10" height="6" viewBox="0 0 10 6"><path d="M1 0.8 L5 4.8 L9 0.8" fill="none" stroke="#3a3a3a" stroke-width="1.1"/></svg></div>
<div class="t " style="right:431.7px;top:524.0px;letter-spacing:-0.36px;">Data bits</div>
<div class="co" style="left:997px;top:520px;width:67px;height:19px;"><span class="cv">8</span><svg class="ch" width="10" height="6" viewBox="0 0 10 6"><path d="M1 0.8 L5 4.8 L9 0.8" fill="none" stroke="#3a3a3a" stroke-width="1.1"/></svg></div>
<div class="t " style="right:425.9px;top:552.0px;letter-spacing:-0.23px;">Port/Board 1</div>
<div class="co" style="left:997px;top:547px;width:67px;height:19px;"><span class="cv"></span><svg class="ch" width="10" height="6" viewBox="0 0 10 6"><path d="M1 0.8 L5 4.8 L9 0.8" fill="none" stroke="#3a3a3a" stroke-width="1.1"/></svg></div>
<div class="bt" style="left:1072px;top:548px;width:20px;height:18px;"></div>
<div class="bt b2" style="left:924px;top:716px;width:49px;height:38px;"><span>Update<br>COM</span></div>
<div class="bt b2" style="left:983px;top:716px;width:47px;height:38px;"><span>Open<br>device</span></div>
<div class="pn" style="left:1056px;top:715px;width:96px;height:42px;"></div>
<div class="bt st" style="left:1067px;top:725px;width:73px;height:21px;"><span>Start</span></div>
<div class="abs" style="left:1075px;top:319px;width:299px;height:273px;border:1px solid #005cb0;background:#fff;box-shadow:2px 2px 3px rgba(0,0,0,.45)">
<div class="t" style="position:absolute;left:0;top:0px;width:297px;height:12px;padding-top:1px;padding-left:2px;letter-spacing:-0.22px">None</div>
<div class="t" style="position:absolute;left:0;top:13px;width:297px;height:12px;padding-top:1px;padding-left:2px;letter-spacing:-0.22px">Low pass EMA</div>
<div class="t" style="position:absolute;left:0;top:26px;width:297px;height:12px;padding-top:1px;padding-left:2px;letter-spacing:-0.22px">High pass EMA</div>
<div class="t" style="position:absolute;left:0;top:39px;width:297px;height:12px;padding-top:1px;padding-left:2px;letter-spacing:-0.22px">Band pass EMA</div>
<div class="t" style="position:absolute;left:0;top:52px;width:297px;height:12px;padding-top:1px;padding-left:2px;letter-spacing:-0.22px">Band stop EMA</div>
<div class="t" style="position:absolute;left:0;top:65px;width:297px;height:12px;padding-top:1px;padding-left:2px;letter-spacing:-0.22px">Low pass DEMA</div>
<div class="t" style="position:absolute;left:0;top:78px;width:297px;height:12px;padding-top:1px;padding-left:2px;letter-spacing:-0.22px">High pass DEMA</div>
<div class="t" style="position:absolute;left:0;top:91px;width:297px;height:12px;padding-top:1px;padding-left:2px;letter-spacing:-0.22px">Band pass DEMA</div>
<div class="t" style="position:absolute;left:0;top:104px;width:297px;height:12px;padding-top:1px;padding-left:2px;letter-spacing:-0.22px">Band stop DEMA</div>
<div class="t" style="position:absolute;left:0;top:117px;width:297px;height:12px;padding-top:1px;padding-left:2px;letter-spacing:-0.22px">Low pass TEMA</div>
<div class="t" style="position:absolute;left:0;top:130px;width:297px;height:12px;padding-top:1px;padding-left:2px;letter-spacing:-0.22px">High pass TEMA</div>
<div class="t" style="position:absolute;left:0;top:143px;width:297px;height:12px;padding-top:1px;padding-left:2px;letter-spacing:-0.22px">Band pass TEMA</div>
<div class="t" style="position:absolute;left:0;top:156px;width:297px;height:12px;padding-top:1px;padding-left:2px;letter-spacing:-0.22px">Band stop TEMA</div>
<div class="t" style="position:absolute;left:0;top:169px;width:297px;height:12px;padding-top:1px;padding-left:2px;letter-spacing:-0.22px">Washout EMA</div>
<div class="t" style="position:absolute;left:0;top:182px;width:297px;height:12px;padding-top:1px;padding-left:2px;letter-spacing:-0.22px">Washout DEMA</div>
<div class="t" style="position:absolute;left:0;top:195px;width:297px;height:12px;padding-top:1px;padding-left:2px;letter-spacing:-0.22px">Washout TEMA</div>
<div class="t" style="position:absolute;left:0;top:208px;width:297px;height:12px;padding-top:1px;padding-left:2px;letter-spacing:-0.22px">EMA LP(LP)</div>
<div class="t" style="position:absolute;left:0;top:221px;width:297px;height:12px;padding-top:1px;padding-left:2px;letter-spacing:-0.22px">EMA LP(HP)</div>
<div class="t" style="position:absolute;left:0;top:234px;width:297px;height:12px;padding-top:1px;padding-left:2px;letter-spacing:-0.22px">EMA LP(LP(LP))</div>
<div class="t" style="position:absolute;left:0;top:247px;width:297px;height:12px;padding-top:1px;padding-left:2px;letter-spacing:-0.22px">EMA LP(LP(HP))</div>
<div class="t" style="position:absolute;left:0;top:260px;width:297px;height:12px;padding-top:1px;padding-left:2px;letter-spacing:-0.1px;background:#0078d7;color:#fff">Logistic (Left value = Slope/1000 ; Right value = Range)</div>
</div>
</body></html>
